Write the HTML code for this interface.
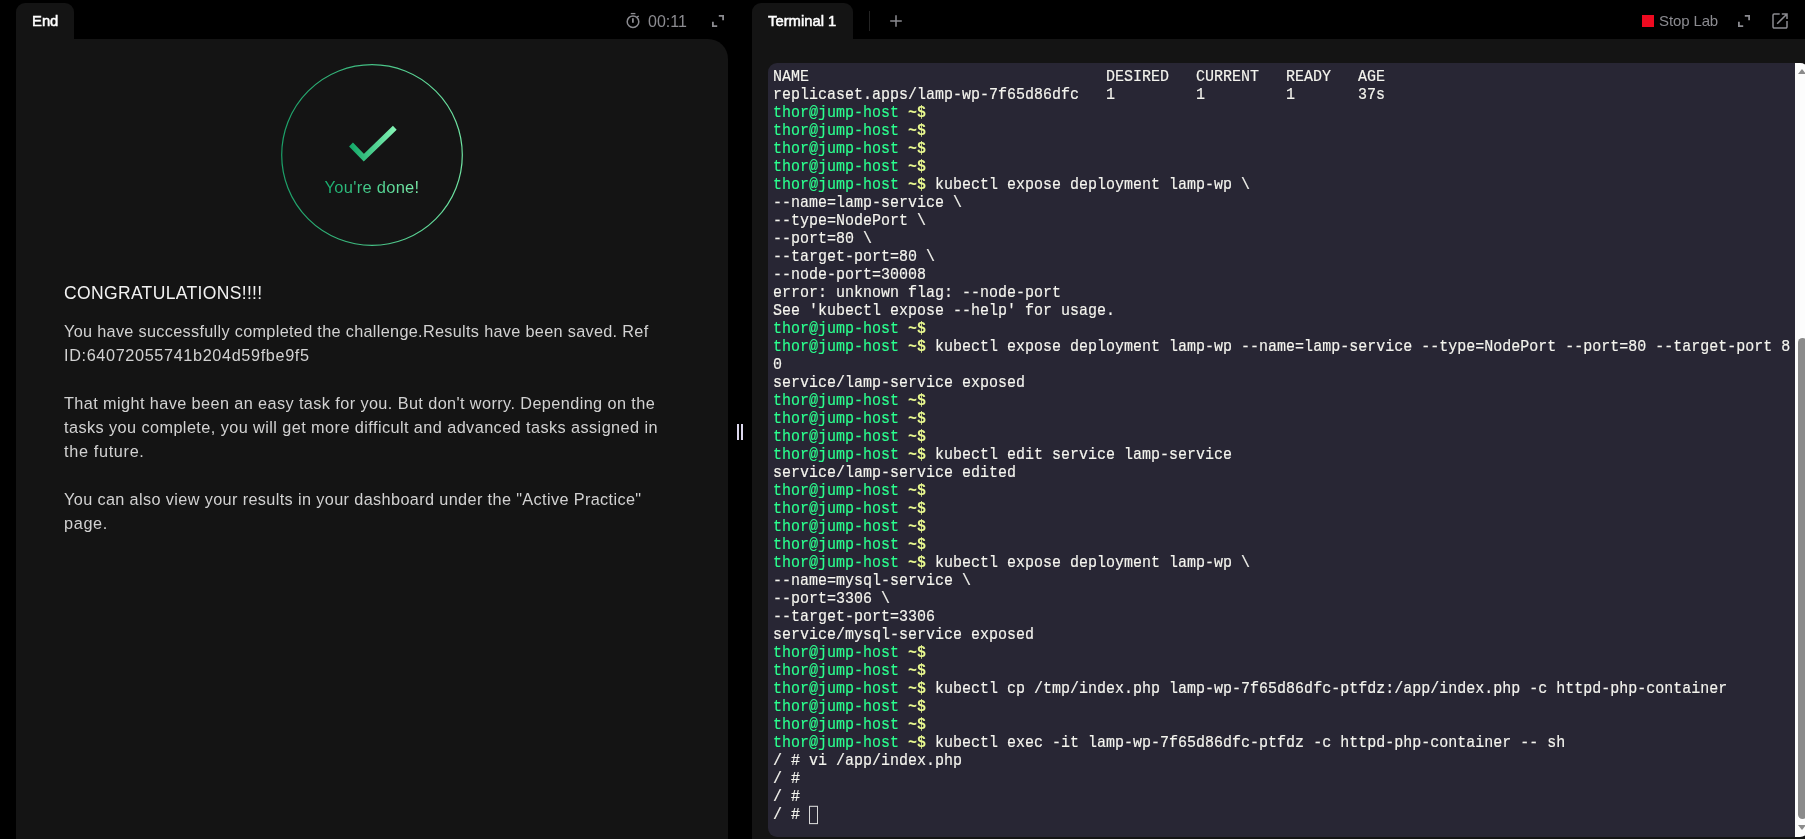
<!DOCTYPE html>
<html lang="en">
<head>
<meta charset="utf-8">
<title>Lab</title>
<style>
*{box-sizing:border-box;margin:0;padding:0}
html,body{width:1805px;height:839px;overflow:hidden;background:#000}
body{position:relative;font-family:"Liberation Sans",sans-serif;color:#fff}
.abs{position:absolute}
.abs,.p{will-change:transform}
/* left panel */
#ltab{left:16px;top:3px;width:58px;height:40px;background:#141414;border-radius:9px 9px 0 0}
#ltab span{position:absolute;left:16px;top:8px;font-weight:normal;-webkit-text-stroke:.5px #fff;font-size:15.2px;line-height:20px;transform:scaleX(.975);transform-origin:0 0;color:#fff;white-space:nowrap}
#lpanel{left:16px;top:39px;width:712px;height:800px;background:#141414;border-radius:0 20px 0 0}
#timer{left:648px;top:12px;font-size:16px;line-height:20px;color:#8b8b90;white-space:nowrap}
/* circle */
#circ{left:281px;top:64px;width:182px;height:182px}
#done{left:272px;top:176px;width:200px;text-align:center;letter-spacing:.27px;font-size:16.5px;line-height:22px;white-space:nowrap}
#done span{background:linear-gradient(90deg,#17ad6e,#7cefac);-webkit-background-clip:text;background-clip:text;color:transparent}
#h1{left:64px;top:281px;letter-spacing:.35px;font-size:17.5px;line-height:24px;color:#f2f2f2;white-space:nowrap}
.p{position:absolute;left:64px;font-size:16.25px;line-height:24px;color:#d2d2d2;white-space:nowrap}
/* handle */
.hb{position:absolute;top:424px;width:2px;height:16px;background:#dcd8ee}
/* right panel */
#rtab{left:752px;top:3px;width:101px;height:40px;background:#141414;border-radius:9px 9px 0 0}
#rtab span{position:absolute;left:16px;top:8px;font-weight:normal;-webkit-text-stroke:.5px #fff;font-size:15.2px;line-height:20px;transform:scaleX(.975);transform-origin:0 0;color:#fff;white-space:nowrap}
#rpanel{left:752px;top:39px;width:1060px;height:800px;background:#141414}
#div{left:869px;top:11px;width:1px;height:20px;background:#242424}
#stop{left:1659px;top:11px;letter-spacing:-.12px;font-size:15px;line-height:20px;color:#8b8b90;white-space:nowrap}
#red{left:1642px;top:15px;width:12px;height:12px;background:#ee0a20}
#term{left:768px;top:63px;width:1041px;height:774px;background:#282634;border-radius:9px;overflow:hidden}
#rows{position:absolute;left:5px;top:5px;-webkit-text-stroke:.15px;font-family:"Liberation Mono",monospace;font-size:15px;color:#f4f4ee}
.r{height:18px;line-height:18px;white-space:pre;transform:translateY(.5px) scaleY(1.08);transform-origin:0 50%}
.g{color:#2bff8e}
.y{color:#e9f98f;font-weight:bold;-webkit-text-stroke:0}
.cur{display:inline-block;width:9px;height:16.6667px;border:1px solid #d8d8d8;vertical-align:top;position:relative;top:.2px}
#sb{left:1027px;top:0;width:15px;height:774px;background:#fcfcfc}
#thumb{left:3px;top:275px;width:9px;height:481px;background:#8b8b8b;border-radius:5px}
.tri{position:absolute;left:3px;width:0;height:0;border-left:4.5px solid transparent;border-right:4.5px solid transparent}
#up{top:6px;border-bottom:5px solid #8b8b8b}
#dn{top:762px;border-top:5px solid #8b8b8b}
svg{position:absolute;overflow:visible}
</style>
</head>
<body>
<div id="ltab" class="abs"><span>End</span></div>
<div id="lpanel" class="abs"></div>

<svg id="ticon" style="left:625px;top:12px" width="16" height="18" viewBox="0 0 16 18" fill="none" stroke="#8b8b90"><circle cx="8" cy="9.7" r="5.8" stroke-width="1.5"/><path d="M5.8 1.6H10.4" stroke-width="1.3"/><path d="M7.9 6.2V10.8" stroke-width="1.8"/><path d="M12.1 4.9L13.8 4.2" stroke-width="1.3"/></svg>
<div id="timer" class="abs">00:11</div>
<svg style="left:712px;top:15px" width="12" height="12" viewBox="0 0 12 12" fill="none" stroke="#8b8b90" stroke-width="1.8"><path d="M6.8 0.9H11.1V5.2M5.2 11.1H0.9V6.8"/></svg>

<svg id="circ" class="abs" viewBox="0 0 182 182" fill="none">
<defs><linearGradient id="gg" x1="0" y1="0" x2="1" y2="0"><stop offset="0" stop-color="#1b9f68"/><stop offset="1" stop-color="#6fe3a2"/></linearGradient>
<linearGradient id="gc" gradientUnits="userSpaceOnUse" x1="68" y1="0" x2="115" y2="0"><stop offset="0" stop-color="#0fa565"/><stop offset="1" stop-color="#86f5b6"/></linearGradient></defs>
<circle cx="91" cy="91" r="90.3" stroke="url(#gg)" stroke-width="1.2"/>
<path d="M70 80.5L82.8 93.7L113.8 63.8" stroke="url(#gc)" stroke-width="5.4" stroke-linejoin="miter"/>
</svg>
<div id="done" class="abs"><span>You're done!</span></div>

<div id="h1" class="abs">CONGRATULATIONS!!!!</div>
<div class="p" style="top:319px;letter-spacing:0.314px">You have successfully completed the challenge.Results have been saved. Ref</div>
<div class="p" style="top:343px;letter-spacing:0.630px">ID:64072055741b204d59fbe9f5</div>
<div class="p" style="top:391px;letter-spacing:0.407px">That might have been an easy task for you. But don't worry. Depending on the</div>
<div class="p" style="top:415px;letter-spacing:0.427px">tasks you complete, you will get more difficult and advanced tasks assigned in</div>
<div class="p" style="top:439px;letter-spacing:0.671px">the future.</div>
<div class="p" style="top:487px;letter-spacing:0.371px">You can also view your results in your dashboard under the "Active Practice"</div>
<div class="p" style="top:511px;letter-spacing:0.657px">page.</div>

<div class="hb" style="left:737px"></div><div class="hb" style="left:741px"></div>

<div id="rtab" class="abs"><span>Terminal 1</span></div>
<div id="rpanel" class="abs"></div>
<div id="div" class="abs"></div>
<svg style="left:890px;top:15px" width="12" height="12" viewBox="0 0 12 12" fill="none" stroke="#8b8b90" stroke-width="1.5"><path d="M6 0.2V11.8M0.2 6H11.8"/></svg>

<div id="red" class="abs"></div>
<div id="stop" class="abs">Stop Lab</div>
<svg style="left:1738px;top:15px" width="12" height="12" viewBox="0 0 12 12" fill="none" stroke="#8b8b90" stroke-width="1.8"><path d="M6.8 0.9H11.1V5.2M5.2 11.1H0.9V6.8"/></svg>
<svg style="left:1772px;top:13px" width="16" height="16" viewBox="0 0 16 16" fill="none" stroke="#8b8b90" stroke-width="1.5"><path d="M7.7 1H2.2a1.2 1.2 0 0 0-1.2 1.2V13.8a1.2 1.2 0 0 0 1.2 1.2H13.8a1.2 1.2 0 0 0 1.2-1.2V8M9.8 1H15V5.9M15 1L5.2 10.7"/></svg>

<div id="term" class="abs">
<div id="rows">
<div class="r">NAME                                 DESIRED   CURRENT   READY   AGE</div>
<div class="r">replicaset.apps/lamp-wp-7f65d86dfc   1         1         1       37s</div>
<div class="r"><span class="g">thor@jump-host</span> <span class="y">~$</span></div>
<div class="r"><span class="g">thor@jump-host</span> <span class="y">~$</span></div>
<div class="r"><span class="g">thor@jump-host</span> <span class="y">~$</span></div>
<div class="r"><span class="g">thor@jump-host</span> <span class="y">~$</span></div>
<div class="r"><span class="g">thor@jump-host</span> <span class="y">~$</span> kubectl expose deployment lamp-wp \</div>
<div class="r">--name=lamp-service \</div>
<div class="r">--type=NodePort \</div>
<div class="r">--port=80 \</div>
<div class="r">--target-port=80 \</div>
<div class="r">--node-port=30008</div>
<div class="r">error: unknown flag: --node-port</div>
<div class="r">See 'kubectl expose --help' for usage.</div>
<div class="r"><span class="g">thor@jump-host</span> <span class="y">~$</span></div>
<div class="r"><span class="g">thor@jump-host</span> <span class="y">~$</span> kubectl expose deployment lamp-wp --name=lamp-service --type=NodePort --port=80 --target-port 8</div>
<div class="r">0</div>
<div class="r">service/lamp-service exposed</div>
<div class="r"><span class="g">thor@jump-host</span> <span class="y">~$</span></div>
<div class="r"><span class="g">thor@jump-host</span> <span class="y">~$</span></div>
<div class="r"><span class="g">thor@jump-host</span> <span class="y">~$</span></div>
<div class="r"><span class="g">thor@jump-host</span> <span class="y">~$</span> kubectl edit service lamp-service</div>
<div class="r">service/lamp-service edited</div>
<div class="r"><span class="g">thor@jump-host</span> <span class="y">~$</span></div>
<div class="r"><span class="g">thor@jump-host</span> <span class="y">~$</span></div>
<div class="r"><span class="g">thor@jump-host</span> <span class="y">~$</span></div>
<div class="r"><span class="g">thor@jump-host</span> <span class="y">~$</span></div>
<div class="r"><span class="g">thor@jump-host</span> <span class="y">~$</span> kubectl expose deployment lamp-wp \</div>
<div class="r">--name=mysql-service \</div>
<div class="r">--port=3306 \</div>
<div class="r">--target-port=3306</div>
<div class="r">service/mysql-service exposed</div>
<div class="r"><span class="g">thor@jump-host</span> <span class="y">~$</span></div>
<div class="r"><span class="g">thor@jump-host</span> <span class="y">~$</span></div>
<div class="r"><span class="g">thor@jump-host</span> <span class="y">~$</span> kubectl cp /tmp/index.php lamp-wp-7f65d86dfc-ptfdz:/app/index.php -c httpd-php-container</div>
<div class="r"><span class="g">thor@jump-host</span> <span class="y">~$</span></div>
<div class="r"><span class="g">thor@jump-host</span> <span class="y">~$</span></div>
<div class="r"><span class="g">thor@jump-host</span> <span class="y">~$</span> kubectl exec -it lamp-wp-7f65d86dfc-ptfdz -c httpd-php-container -- sh</div>
<div class="r">/ # vi /app/index.php</div>
<div class="r">/ # </div>
<div class="r">/ # </div>
<div class="r">/ # <span class="cur"></span></div>
</div>
<div id="sb" class="abs"><div class="tri" id="up"></div><div id="thumb" class="abs"></div><div class="tri" id="dn"></div></div>
</div>
</body>
</html>
